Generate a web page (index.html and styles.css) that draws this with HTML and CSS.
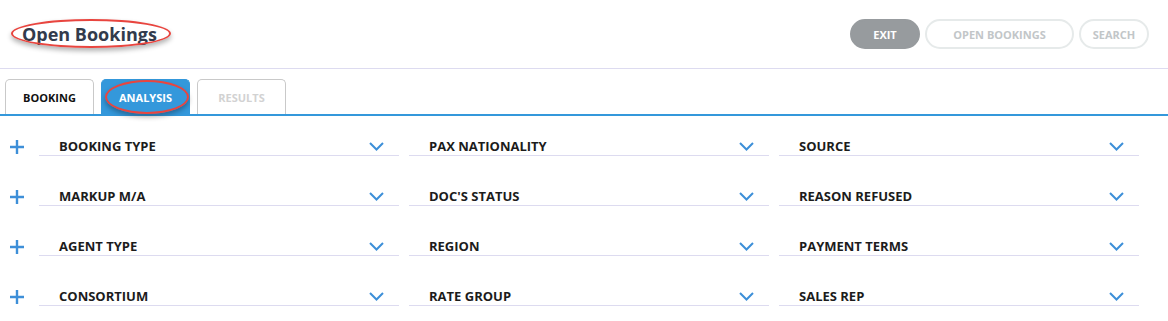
FILE: index.html
```html
<!DOCTYPE html>
<html lang="en">
<head>
  <meta charset="UTF-8" />
  <title>Open Bookings</title>
  <link rel="stylesheet" href="styles.css">
</head>
<body>
  <div class="header">
    <h1 class="title">Open Bookings</h1>
    <span class="mark mark-title"></span>
    <div class="actions">
      <button class="btn btn-exit">EXIT</button>
      <button class="btn btn-open">OPEN BOOKINGS</button>
      <button class="btn btn-search">SEARCH</button>
    </div>
  </div>

  <div class="tabs">
    <div class="tab">BOOKING</div>
    <div class="tab tab-active">ANALYSIS<span class="mark mark-tab"></span></div>
    <div class="tab tab-disabled">RESULTS</div>
  </div>

  <div class="filters">
    <div class="row">
      <svg class="plus" width="14" height="14" viewBox="0 0 14 14"><path d="M7 0V14M0 7H14"/></svg>
      <div class="field"><span>BOOKING TYPE</span><svg class="chev" width="15" height="9" viewBox="0 0 15 9"><path d="M1 1L7.5 7.5L14 1"/></svg></div>
      <div class="field"><span>PAX NATIONALITY</span><svg class="chev" width="15" height="9" viewBox="0 0 15 9"><path d="M1 1L7.5 7.5L14 1"/></svg></div>
      <div class="field"><span>SOURCE</span><svg class="chev" width="15" height="9" viewBox="0 0 15 9"><path d="M1 1L7.5 7.5L14 1"/></svg></div>
    </div>
    <div class="row">
      <svg class="plus" width="14" height="14" viewBox="0 0 14 14"><path d="M7 0V14M0 7H14"/></svg>
      <div class="field"><span>MARKUP M/A</span><svg class="chev" width="15" height="9" viewBox="0 0 15 9"><path d="M1 1L7.5 7.5L14 1"/></svg></div>
      <div class="field"><span>DOC'S STATUS</span><svg class="chev" width="15" height="9" viewBox="0 0 15 9"><path d="M1 1L7.5 7.5L14 1"/></svg></div>
      <div class="field"><span>REASON REFUSED</span><svg class="chev" width="15" height="9" viewBox="0 0 15 9"><path d="M1 1L7.5 7.5L14 1"/></svg></div>
    </div>
    <div class="row">
      <svg class="plus" width="14" height="14" viewBox="0 0 14 14"><path d="M7 0V14M0 7H14"/></svg>
      <div class="field"><span>AGENT TYPE</span><svg class="chev" width="15" height="9" viewBox="0 0 15 9"><path d="M1 1L7.5 7.5L14 1"/></svg></div>
      <div class="field"><span>REGION</span><svg class="chev" width="15" height="9" viewBox="0 0 15 9"><path d="M1 1L7.5 7.5L14 1"/></svg></div>
      <div class="field"><span>PAYMENT TERMS</span><svg class="chev" width="15" height="9" viewBox="0 0 15 9"><path d="M1 1L7.5 7.5L14 1"/></svg></div>
    </div>
    <div class="row">
      <svg class="plus" width="14" height="14" viewBox="0 0 14 14"><path d="M7 0V14M0 7H14"/></svg>
      <div class="field"><span>CONSORTIUM</span><svg class="chev" width="15" height="9" viewBox="0 0 15 9"><path d="M1 1L7.5 7.5L14 1"/></svg></div>
      <div class="field"><span>RATE GROUP</span><svg class="chev" width="15" height="9" viewBox="0 0 15 9"><path d="M1 1L7.5 7.5L14 1"/></svg></div>
      <div class="field"><span>SALES REP</span><svg class="chev" width="15" height="9" viewBox="0 0 15 9"><path d="M1 1L7.5 7.5L14 1"/></svg></div>
    </div>
  </div>
</body>
</html>
```

FILE: styles.css
```css
body {
  margin: 0;
  font-family: "Open Sans", "Liberation Sans", sans-serif;
  background: #fff;
  color: #1c1c1c;
}
.header {
  position: relative;
  display: flex;
  align-items: center;
  justify-content: space-between;
  height: 68px;
  padding: 0 19px 0 22px;
  border-bottom: 1px solid #dddbf0;
}
.title {
  margin: 0;
  font-size: 18px;
  font-weight: 700;
  color: #323b4c;
}
.mark {
  position: absolute;
  border: 2px solid #e8453f;
  border-radius: 50%;
  box-shadow: 0 3px 5px rgba(0, 0, 0, 0.3);
  pointer-events: none;
}
.mark-title {
  left: 11px;
  top: 19px;
  width: 156px;
  height: 25px;
}
.actions {
  display: flex;
  gap: 5px;
}
.btn {
  height: 30px;
  border-radius: 15px;
  font-family: inherit;
  font-size: 11px;
  font-weight: 700;
  padding: 0;
  border: 2px solid #e6eaea;
  background: #fff;
  color: #c2c6c8;
}
.btn-exit {
  width: 70px;
  background: #979b9e;
  border-color: #979b9e;
  color: #fff;
}
.btn-open {
  width: 149px;
}
.btn-search {
  width: 70px;
}
.tabs {
  display: flex;
  gap: 7px;
  margin-top: 10px;
  padding-left: 5px;
  border-bottom: 2px solid #3498db;
}
.tab {
  position: relative;
  width: 87px;
  height: 34px;
  line-height: 36px;
  text-align: center;
  font-size: 11px;
  font-weight: 700;
  color: #111;
  border: 1px solid #c9c9c9;
  border-bottom: none;
  border-radius: 5px 5px 0 0;
}
.tab-active {
  background: #3498db;
  border-color: #3498db;
  color: #fff;
}
.tab-disabled {
  color: #d2d2d2;
}
.mark-tab {
  left: 3px;
  top: 0;
  width: 80px;
  height: 30px;
}
.filters {
  display: flex;
  flex-direction: column;
  gap: 30px;
  padding-top: 20px;
}
.row {
  display: flex;
  align-items: flex-end;
}
.plus {
  width: 14px;
  margin: 0 15px 2px 10px;
  stroke: #3d8fd8;
  stroke-width: 2.4;
  fill: none;
}
.field {
  display: flex;
  align-items: center;
  justify-content: space-between;
  width: 325px;
  height: 18px;
  margin-right: 10px;
  padding: 1px 15px 0 20px;
  border-bottom: 1px solid #dddbf0;
  font-size: 13px;
  font-weight: 700;
  color: #1c1c1c;
}
.chev {
  stroke: #3d8fd8;
  stroke-width: 2;
  fill: none;
}
```
